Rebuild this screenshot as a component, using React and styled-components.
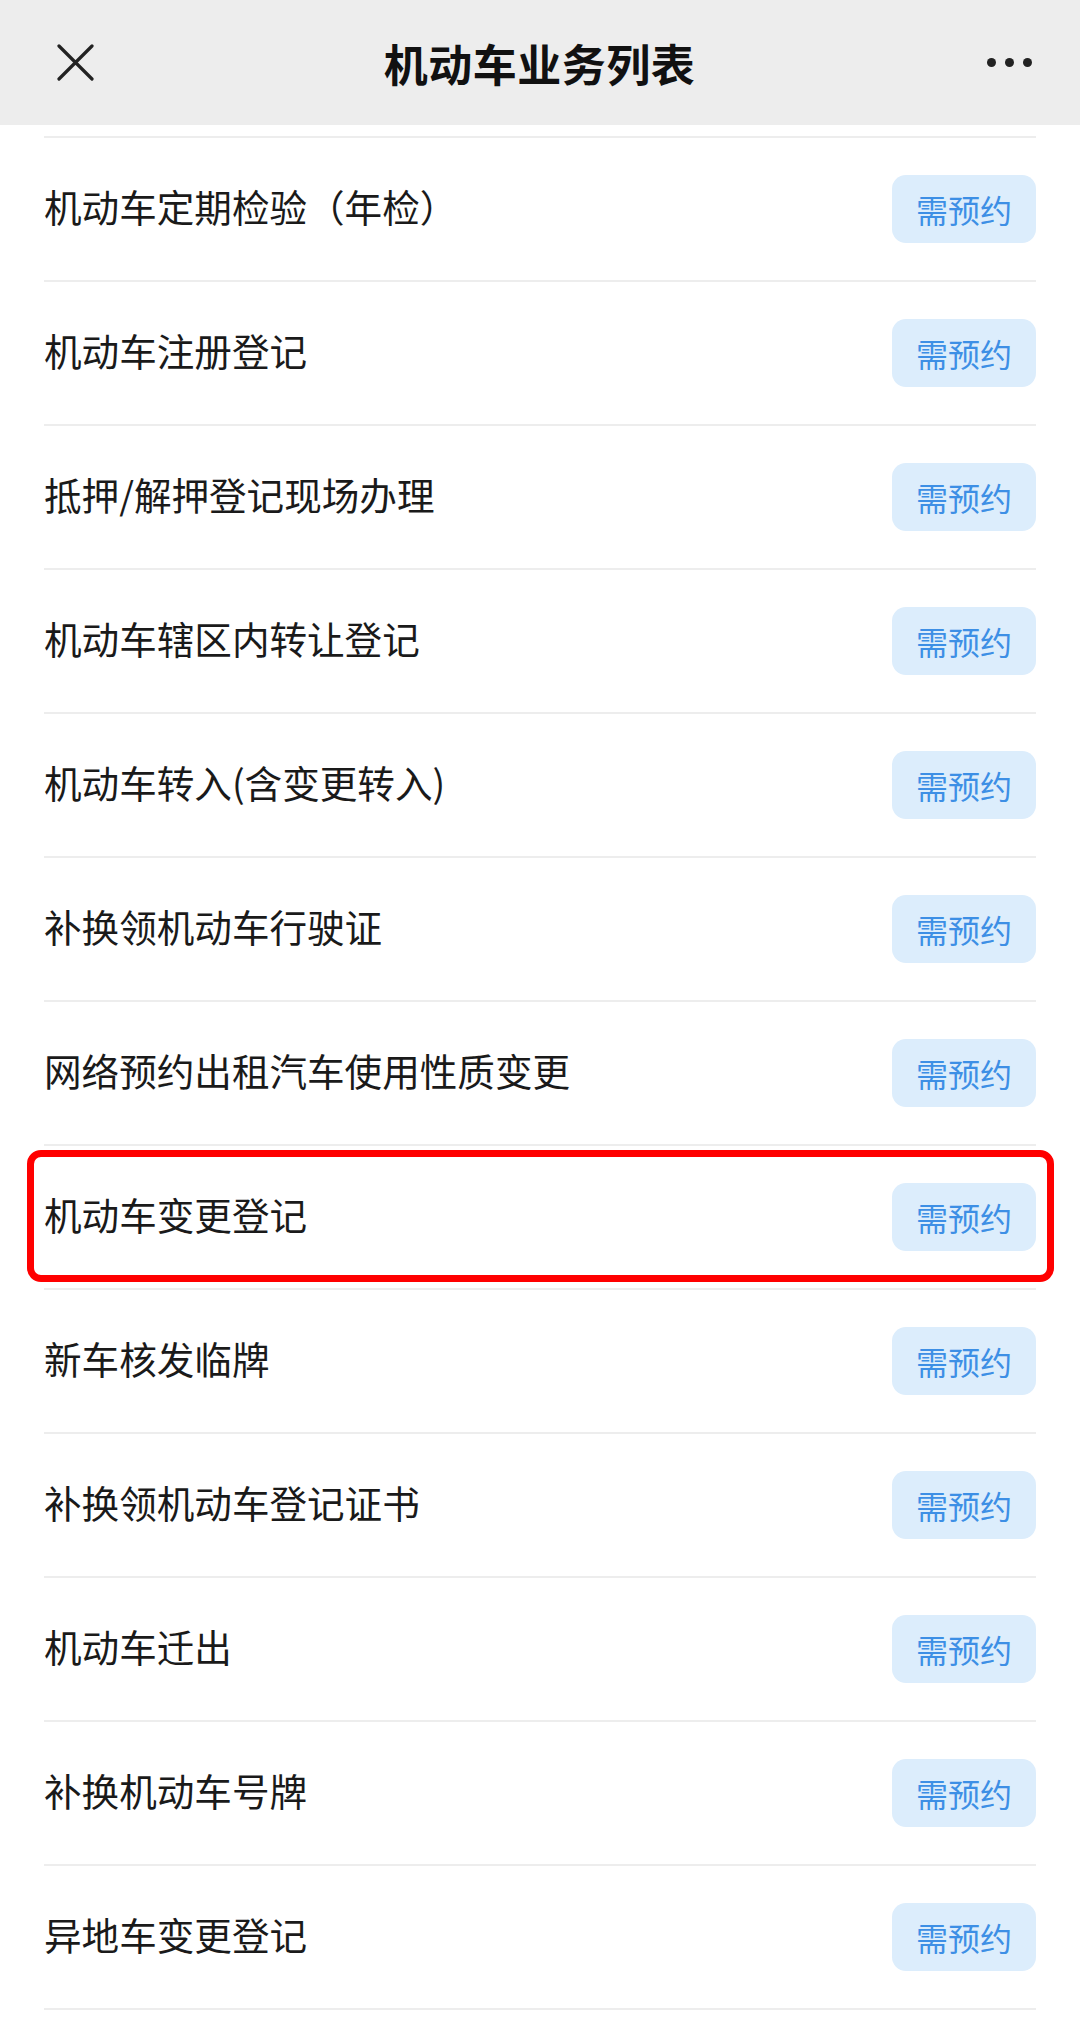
import React from 'react';
import styled, {createGlobalStyle} from 'styled-components';

const GlobalStyle = createGlobalStyle`
  html, body {
    margin: 0;
    padding: 0;
    background: #ffffff;
  }
  body {
    font-family: "Noto Sans CJK SC", "Noto Sans", sans-serif;
    color: #1a1a1a;
  }
`;

const Page = styled.div`
  width: 1080px;
  min-height: 2021px;
  background: #ffffff;
`;

const Header = styled.header`
  height: 125px;
  background: #ededed;
  display: grid;
  grid-template-columns: 1fr auto 1fr;
  align-items: center;
  padding: 0 48px 0 57px;
  box-sizing: border-box;
`;

const Title = styled.h1`
  margin: 0 10px 0 0;
  font-size: 44px;
  font-weight: 600;
  color: #111111;
  letter-spacing: 0.5px;
`;

const IconButton = styled.div`
  display: flex;
  align-items: center;
  justify-self: ${p => (p.$end ? 'end' : 'start')};
  gap: 9px;
`;

const Dot = styled.span`
  width: 9px;
  height: 9px;
  border-radius: 50%;
  background: #222222;
`;

const List = styled.ul`
  list-style: none;
  margin: 0;
  padding: 11px 44px 0 44px;
`;

const Row = styled.li`
  position: relative;
  height: 142px;
  border-top: 2px solid #ededed;
  display: flex;
  align-items: center;
  justify-content: space-between;

  &:last-child {
    border-bottom: 2px solid #ededed;
  }
`;

const Name = styled.span`
  font-size: 37.6px;
  color: #1a1a1a;
  line-height: 1;
  margin-top: -6px;
`;

const Tag = styled.span`
  width: 144px;
  height: 68px;
  border-radius: 14px;
  background: #dcedfc;
  color: #3d8fe5;
  font-size: 32px;
  display: flex;
  align-items: center;
  justify-content: center;
`;

// red annotation frame drawn over one row
const Highlight = styled.div`
  position: absolute;
  top: 4px;
  bottom: 6px;
  left: -17px;
  right: -18px;
  border: 7px solid #ff0000;
  border-radius: 14px;
  pointer-events: none;
`;

const items = [
  '机动车定期检验（年检）',
  '机动车注册登记',
  '抵押/解押登记现场办理',
  '机动车辖区内转让登记',
  '机动车转入(含变更转入)',
  '补换领机动车行驶证',
  '网络预约出租汽车使用性质变更',
  '机动车变更登记',
  '新车核发临牌',
  '补换领机动车登记证书',
  '机动车迁出',
  '补换机动车号牌',
  '异地车变更登记',
];

const CloseIcon = () => (
  <svg width="37" height="37" viewBox="0 0 37 37">
    <path d="M2 2 L35 35 M35 2 L2 35" stroke="#222" strokeWidth="3.2" strokeLinecap="round" fill="none"/>
  </svg>
);

const App = () => (
  <Page>
    <GlobalStyle/>
    <Header>
      <IconButton><CloseIcon/></IconButton>
      <Title>机动车业务列表</Title>
      <IconButton $end>
        <Dot/><Dot/><Dot/>
      </IconButton>
    </Header>
    <List>
      {items.map(name => (
        <Row key={name}>
          <Name>{name}</Name>
          <Tag>需预约</Tag>
          {name === '机动车变更登记' && <Highlight/>}
        </Row>
      ))}
    </List>
  </Page>
);

export default App;
